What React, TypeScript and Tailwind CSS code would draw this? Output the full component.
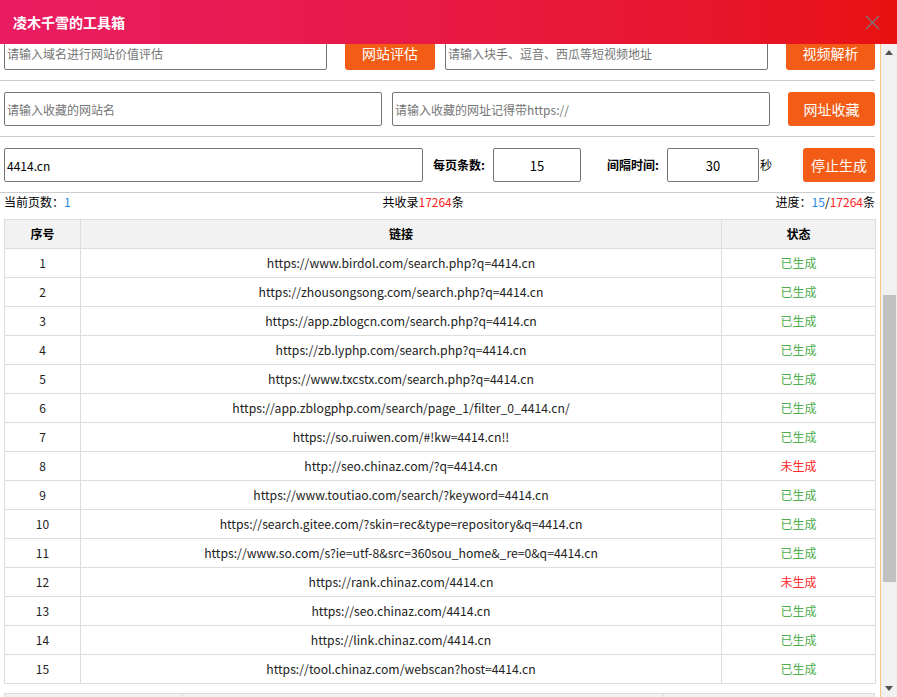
import React from "react";

const LINKS: [string, boolean][] = [
  ["https://www.birdol.com/search.php?q=4414.cn", true],
  ["https://zhousongsong.com/search.php?q=4414.cn", true],
  ["https://app.zblogcn.com/search.php?q=4414.cn", true],
  ["https://zb.lyphp.com/search.php?q=4414.cn", true],
  ["https://www.txcstx.com/search.php?q=4414.cn", true],
  ["https://app.zblogphp.com/search/page_1/filter_0_4414.cn/", true],
  ["https://so.ruiwen.com/#!kw=4414.cn!!", true],
  ["http://seo.chinaz.com/?q=4414.cn", false],
  ["https://www.toutiao.com/search/?keyword=4414.cn", true],
  ["https://search.gitee.com/?skin=rec&type=repository&q=4414.cn", true],
  ["https://www.so.com/s?ie=utf-8&src=360sou_home&_re=0&q=4414.cn", true],
  ["https://rank.chinaz.com/4414.cn", false],
  ["https://seo.chinaz.com/4414.cn", true],
  ["https://link.chinaz.com/4414.cn", true],
  ["https://tool.chinaz.com/webscan?host=4414.cn", true],
];

function Field({ w, placeholder, value, center }: { w: string; placeholder?: string; value?: string; center?: boolean }) {
  return (
    <input
      readOnly
      placeholder={placeholder}
      defaultValue={value}
      className={`${w} h-[34px] shrink-0 border border-[#767676] rounded-[2px] px-[2px] text-[12px] text-black outline-none placeholder:text-[#757575] ${center ? "text-center text-[13px]" : ""}`}
    />
  );
}

function OrangeButton({ w, children }: { w: string; children: React.ReactNode }) {
  return (
    <button className={`${w} h-[34px] shrink-0 rounded-[3px] bg-[#f25c16] text-white text-[14px]`}>
      {children}
    </button>
  );
}

function Scrollbar() {
  return (
    <div className="w-[16px] h-full flex flex-col bg-[#f1f1f1]">
      <div className="h-[17px] flex items-center justify-center">
        <svg width="8" height="5" viewBox="0 0 8 5">
          <path d="M0 5 L4 0 L8 5 Z" fill="#505050" />
        </svg>
      </div>
      <div className="flex-1 pl-[2px] pr-[1px]">
        <div className="mt-[234px] h-[287px] bg-[#c1c1c1]" />
      </div>
      <div className="h-[17px] flex items-center justify-center">
        <svg width="8" height="5" viewBox="0 0 8 5">
          <path d="M0 0 L8 0 L4 5 Z" fill="#505050" />
        </svg>
      </div>
    </div>
  );
}

export default function App() {
  return (
    <div className="w-[897px] h-[697px] overflow-hidden bg-white font-['Noto_Sans_CJK_SC',sans-serif] text-[12px] text-[#222]">
      {/* title bar */}
      <div className="relative z-10 h-[44px] flex items-center justify-between pl-[13px] pr-[17px] bg-gradient-to-r from-[#e91c62] to-[#e8110f]">
        <span className="text-white text-[14px] font-bold">凌木千雪的工具箱</span>
        <svg width="15" height="15" viewBox="0 0 15 15" stroke="#7a7a7a" strokeWidth="1.2">
          <path d="M1 1 L14 14 M14 1 L1 14" />
        </svg>
      </div>

      <div className="flex h-[653px]">
        <div className="w-[881px] h-full overflow-hidden border-r border-[#f9c67c] pr-[5px]">
          <div className="mt-[-19px]">
            {/* row 1 */}
            <div className="flex items-center pl-[4px] pt-[11px] pb-[10px] border-b border-[#cccccc]">
              <Field w="w-[323px]" placeholder="请输入域名进行网站价值评估" />
              <div className="ml-[18px]"><OrangeButton w="w-[90px]">网站评估</OrangeButton></div>
              <div className="ml-[10px]"><Field w="w-[323px]" placeholder="请输入块手、逗音、西瓜等短视频地址" /></div>
              <div className="ml-auto"><OrangeButton w="w-[89px]">视频解析</OrangeButton></div>
            </div>

            {/* row 2 */}
            <div className="flex items-center pl-[4px] pt-[11px] pb-[10px] border-b border-[#cccccc]">
              <Field w="w-[378px]" placeholder="请输入收藏的网站名" />
              <div className="ml-[10px]"><Field w="w-[378px]" placeholder="请输入收藏的网址记得带https://" /></div>
              <div className="ml-auto"><OrangeButton w="w-[87px]">网址收藏</OrangeButton></div>
            </div>

            {/* row 3 */}
            <div className="flex items-center pl-[4px] pt-[11px] pb-[10px] border-b border-[#cccccc]">
              <Field w="w-[419px]" value="4414.cn" />
              <span className="ml-[10px] w-[60px] font-bold text-black">每页条数:</span>
              <Field w="w-[88px]" value="15" center />
              <span className="ml-[26px] w-[60px] font-bold text-black">间隔时间:</span>
              <Field w="w-[92px]" value="30" center />
              <span className="ml-[1px] text-black">秒</span>
              <div className="ml-auto"><OrangeButton w="w-[72px]">停止生成</OrangeButton></div>
            </div>

            {/* stats */}
            <div className="flex justify-between h-[18px] leading-[18px] pl-[4px] mb-[8px] text-black">
              <span>当前页数：<span className="text-[#1e88e5]">1</span></span>
              <span>共收录<span className="text-[#ff2424]">17264</span>条</span>
              <span>进度：<span className="text-[#1e88e5]">15</span>/<span className="text-[#ff2424]">17264</span>条</span>
            </div>

            {/* table */}
            <div className="pl-[4px]">
              <table className="w-[871px] table-fixed border-collapse text-center">
                <colgroup>
                  <col className="w-[76px]" />
                  <col className="w-[641px]" />
                  <col className="w-[154px]" />
                </colgroup>
                <thead>
                  <tr className="bg-[#f2f2f2]">
                    <th className="h-[29px] border border-[#dddddd] font-bold text-black">序号</th>
                    <th className="h-[29px] border border-[#dddddd] font-bold text-black">链接</th>
                    <th className="h-[29px] border border-[#dddddd] font-bold text-black">状态</th>
                  </tr>
                </thead>
                <tbody>
                  {LINKS.map(([url, done], i) => (
                    <tr key={i}>
                      <td className="h-[29px] border border-[#dddddd] text-[#222]">{i + 1}</td>
                      <td className="h-[29px] border border-[#dddddd] text-[12.2px] text-[#222]">{url}</td>
                      <td className={`h-[29px] border border-[#dddddd] ${done ? "text-[#4cae4c]" : "text-[#ff2a2a]"}`}>
                        {done ? "已生成" : "未生成"}
                      </td>
                    </tr>
                  ))}
                </tbody>
              </table>

              <div className="mt-[9px] w-[871px] h-[30px] flex bg-[#f2f2f2] border border-[#dddddd]">
                <div className="w-[178px] border-r border-[#dddddd]" />
                <div className="w-[481px] border-r border-[#dddddd]" />
                <div className="flex-1" />
              </div>
            </div>
          </div>
        </div>
        <Scrollbar />
      </div>
    </div>
  );
}
